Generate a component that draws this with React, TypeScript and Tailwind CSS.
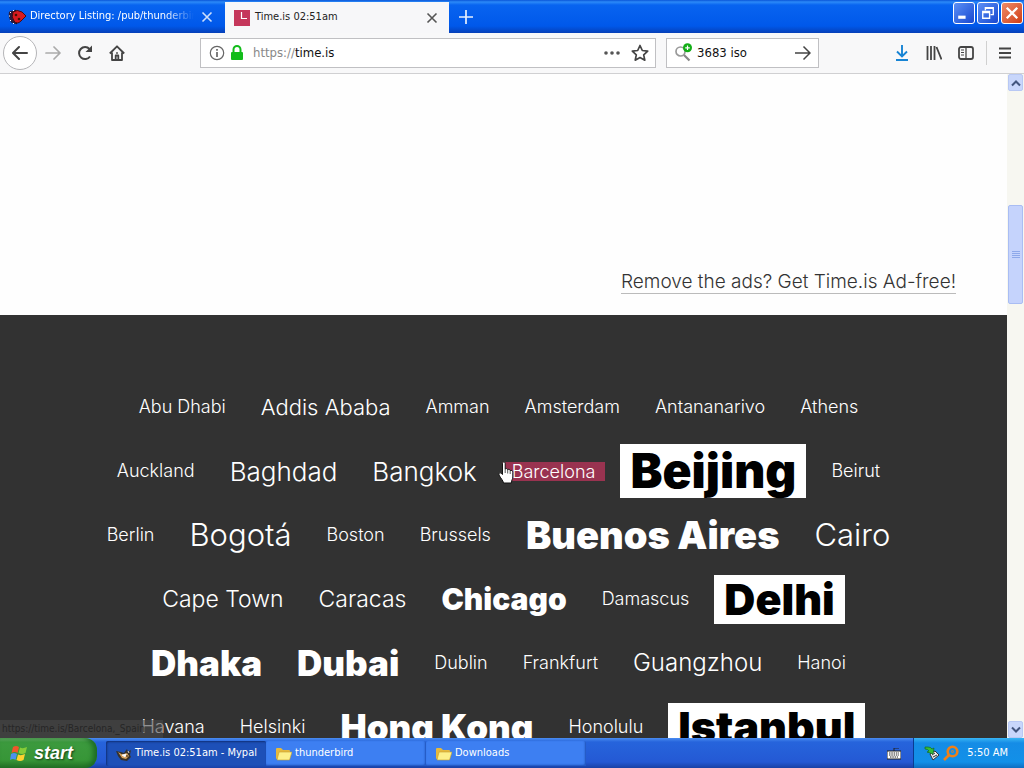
import React from "react";

type City = { name: string; cls: string; box?: boolean; hover?: boolean };

const s = "text-lg font-light";
const rows: City[][] = [
  [
    { name: "Abu Dhabi", cls: s },
    { name: "Addis Ababa", cls: "text-[22px] font-light" },
    { name: "Amman", cls: s },
    { name: "Amsterdam", cls: s },
    { name: "Antananarivo", cls: s },
    { name: "Athens", cls: s },
  ],
  [
    { name: "Auckland", cls: s },
    { name: "Baghdad", cls: "text-[26px] font-light" },
    { name: "Bangkok", cls: "text-[26px] font-light" },
    { name: "Barcelona", cls: s, hover: true },
    { name: "Beijing", cls: "text-5xl leading-[54px] font-black", box: true },
    { name: "Beirut", cls: s },
  ],
  [
    { name: "Berlin", cls: s },
    { name: "Bogotá", cls: "text-[31px] font-light" },
    { name: "Boston", cls: s },
    { name: "Brussels", cls: s },
    { name: "Buenos Aires", cls: "text-[38px] font-black" },
    { name: "Cairo", cls: "text-[31px] font-light" },
  ],
  [
    { name: "Cape Town", cls: "text-[23px] font-light" },
    { name: "Caracas", cls: "text-[23px] font-light" },
    { name: "Chicago", cls: "text-[30px] font-black" },
    { name: "Damascus", cls: s },
    { name: "Delhi", cls: "text-[43px] leading-[49px] font-black", box: true },
  ],
  [
    { name: "Dhaka", cls: "text-[35px] font-black" },
    { name: "Dubai", cls: "text-[35px] font-black" },
    { name: "Dublin", cls: s },
    { name: "Frankfurt", cls: s },
    { name: "Guangzhou", cls: "text-2xl font-light" },
    { name: "Hanoi", cls: s },
  ],
  [
    { name: "Havana", cls: s },
    { name: "Helsinki", cls: s },
    { name: "Hong Kong", cls: "text-[35px] font-black" },
    { name: "Honolulu", cls: s },
    { name: "Istanbul", cls: "text-[43px] leading-[49px] font-black", box: true },
  ],
];

function Close({ className }: { className: string }) {
  return (
    <svg viewBox="0 0 12 12" className={className} fill="none" stroke="currentColor" strokeWidth="1.6">
      <path d="M1.5 1.5l9 9M10.5 1.5l-9 9" />
    </svg>
  );
}

function Hand() {
  return (
    <svg viewBox="0 0 16 23" className="absolute -left-1 -top-px h-[23px] w-4" fill="#fff" stroke="#111" strokeWidth="1">
      <path d="M4.500 13.500V2.200C4.500 .300 7.200 .300 7.200 2.200V8C8 7.200 9.500 7.500 9.700 8.700C10.700 8 12 8.500 12.200 9.600C13.500 9 14.800 9.700 14.800 11.200V16C14.800 18 13.500 19 13.300 22H5.500C5.200 19.500 2.500 17 1 14C.300 12.300 2 11.200 3.200 12.300Z" />
      <path d="M7.200 8v4M9.700 9v3.500M12.200 10v3" strokeWidth=".7" />
    </svg>
  );
}

function TabBar() {
  return (
    <header className="flex h-[33px] shrink-0 bg-[linear-gradient(#0a55d8_0,#2c8af8_2px,#0864f0_5px,#0058ea_26px,#0640b8_33px)]">
      <div className="flex w-[225px] items-center pl-2 pr-3 text-white">
        <svg viewBox="0 0 18 16" className="h-4 w-[18px] shrink-0">
          <path d="M3 3l3 2M1 8h4M3 13l3-2M7 1l1 3M8 15l1-3" stroke="#111" strokeWidth="1.500" />
          <path d="M1 3Q0 8 3 13Q5 15 8 15L6 2Q3 1 1 3Z" fill="#2a1a3c" />
          <path d="M5 3Q9 0 14 3L18 7L13 12Q9 16 6 12Q3 8 5 3Z" fill="#d71a1f" stroke="#440b12" />
          <circle cx="8" cy="6" r="1.300" fill="#410" />
          <circle cx="11" cy="10" r="1.300" fill="#410" />
          <path d="M2 3l1 1M1 7h1M2 11l1 1M5 1l1 1M5 14l1 1" stroke="#fff" />
        </svg>
        <span className="ml-1 w-[164px] overflow-hidden whitespace-nowrap text-[11px] [mask-image:linear-gradient(90deg,#000_82%,transparent)]">Directory Listing: /pub/thunderbird</span>
        <button aria-label="Close tab" className="ml-auto text-white/80"><Close className="size-3" /></button>
      </div>
      <div className="mt-0.5 flex w-56 items-center bg-[#f7f7f9] pl-[9px] pr-[11px] text-[#222]">
        <svg viewBox="0 0 16 16" className="size-4"><path fill="#c5375b" d="M0 0h16v16H0z" /><path d="M7.500 2v6.500H13" fill="none" stroke="#fff" strokeWidth="1.200" /></svg>
        <span className="ml-[5px] text-[11px]">Time.is 02:51am</span>
        <button aria-label="Close tab" className="ml-auto text-[#555]"><Close className="size-3" /></button>
      </div>
      <button aria-label="New tab" className="ml-2.5 text-white/90">
        <svg viewBox="0 0 14 14" className="size-3.5" stroke="currentColor" strokeWidth="1.700"><path d="M7 0v14M0 7h14" /></svg>
      </button>
      <div className="ml-auto mr-px mt-0.5 flex gap-0.5">
        <button aria-label="Minimise" className="size-[22px] rounded-[3px] border border-white bg-linear-to-br from-[#5d8ff5] to-[#1846d0]">
          <svg viewBox="0 0 19 19"><path d="M4 12h7v3H4z" fill="#fff" /></svg>
        </button>
        <button aria-label="Restore" className="size-[22px] rounded-[3px] border border-white bg-linear-to-br from-[#5d8ff5] to-[#1846d0]">
          <svg viewBox="0 0 19 19" fill="none" stroke="#fff" strokeWidth="1.300"><path d="M7 7V4.500h7.500V11H12M4.500 8H11v6.500H4.500zM4.500 9H11M7 5h7.500" /></svg>
        </button>
        <button aria-label="Close" className="size-[22px] rounded-[3px] border border-white bg-linear-to-br from-[#ef8a67] to-[#cf3b0c]">
          <svg viewBox="0 0 19 19" stroke="#fff" strokeWidth="2.200"><path d="M4.500 4.500l10 10M14.500 4.500l-10 10" /></svg>
        </button>
      </div>
    </header>
  );
}

function Toolbar() {
  return (
    <nav className="flex h-[41px] shrink-0 items-center border-b border-[#d0d0d2] bg-[#f8f8f9] text-[#444]">
      <button aria-label="Back" className="ml-[3px] flex size-[34px] items-center justify-center rounded-full border border-[#b5b5b8] bg-white">
        <svg viewBox="0 0 16 16" className="size-4" fill="none" stroke="currentColor" strokeWidth="2" strokeLinecap="round" strokeLinejoin="round"><path d="M15 8H1.500M7 2L1 8l6 6" /></svg>
      </button>
      <button aria-label="Forward" className="ml-2 text-[#aaa]">
        <svg viewBox="0 0 16 16" className="size-4" fill="none" stroke="currentColor" strokeWidth="1.700" strokeLinecap="round" strokeLinejoin="round"><path d="M1 8h13.500M9 2l6 6-6 6" /></svg>
      </button>
      <button aria-label="Reload" className="ml-4">
        <svg viewBox="0 0 16 16" className="size-4" fill="none" stroke="currentColor" strokeWidth="2"><path d="M13 11.500A6 6 0 1 1 12.500 4" /><path d="M15 .500V7H8.500z" fill="currentColor" stroke="none" /></svg>
      </button>
      <button aria-label="Home" className="ml-4">
        <svg viewBox="0 0 16 16" className="size-4" fill="none" stroke="currentColor" strokeWidth="1.800" strokeLinejoin="round"><path d="M.800 8.500L8 1.300l7.200 7.200M3 7.500V15h10V7.500" /><path d="M6.700 15v-4.500h2.600V15M8 7.200v1.600" /></svg>
      </button>
      <div className="ml-[75px] flex h-[30px] min-w-0 flex-1 items-center border border-[#c0c0c3] bg-white pl-2 pr-1.5">
        <svg viewBox="0 0 16 16" className="size-4 shrink-0" fill="none" stroke="#666" strokeWidth="1.200"><circle cx="8" cy="8" r="6.700" /><path d="M8 7v5M8 4v1.700" strokeWidth="1.700" /></svg>
        <svg viewBox="0 0 14 16" className="ml-[5px] h-4 w-3.5 shrink-0"><path d="M3.500 8V4.500a3.500 3.500 0 0 1 7 0V8" fill="none" stroke="#12bc1a" strokeWidth="2" /><rect x="1" y="7" width="12" height="8" rx="1" fill="#12bc1a" /></svg>
        <a href="https://time.is" className="ml-[9px] text-[13px] text-[#111]"><span className="text-[#888]">https://</span>time.is</a>
        <svg viewBox="0 0 18 16" className="ml-auto h-4 w-[18px]" fill="#555"><circle cx="3" cy="8" r="1.800" /><circle cx="9" cy="8" r="1.800" /><circle cx="15" cy="8" r="1.800" /></svg>
        <button aria-label="Bookmark" className="ml-2.5">
          <svg viewBox="0 0 18 18" className="size-[18px]" fill="none" stroke="currentColor" strokeWidth="1.700" strokeLinejoin="round"><path d="M9 1.500l2.300 5 5.400.600-4 3.700 1.100 5.400L9 13.500l-4.800 2.700 1.100-5.400-4-3.700 5.400-.600z" /></svg>
        </button>
      </div>
      <div className="ml-2.5 flex h-[30px] w-[153px] items-center border border-[#c0c0c3] bg-white px-[7px]">
        <svg viewBox="0 0 20 20" className="size-5 shrink-0" fill="none"><circle cx="6.500" cy="8.500" r="4.500" stroke="#999" strokeWidth="1.700" /><path d="M10 12l5.500 5.500" stroke="#888" strokeWidth="2.200" /><circle cx="13.500" cy="4.800" r="4.500" fill="#12ae16" /><path d="M13.500 2.500v4.600M11.200 4.800h4.600" stroke="#fff" strokeWidth="1.200" /></svg>
        <input aria-label="Search" defaultValue="3683 iso" className="ml-[3px] w-20 min-w-0 flex-1 bg-transparent text-[13px] text-[#111] outline-none" />
        <button aria-label="Go"><svg viewBox="0 0 16 16" className="size-4" fill="none" stroke="currentColor" strokeWidth="1.500"><path d="M0 8h15M8.500 1.500L15 8l-6.500 6.500" /></svg></button>
      </div>
      <div className="ml-[75px] mr-3 flex items-center gap-4">
        <button aria-label="Downloads"><svg viewBox="0 0 16 16" className="size-4" fill="none" stroke="#1784d4" strokeWidth="1.900"><path d="M8 0v11M3 6.500l5 5 5-5M2 15h12" /></svg></button>
        <button aria-label="Library"><svg viewBox="0 0 16 16" className="size-4" fill="none" stroke="currentColor" strokeWidth="1.800"><path d="M1.500 1v14M5 1v14M8.500 1v14M10.500 2l5 12.500" /></svg></button>
        <button aria-label="Sidebars"><svg viewBox="0 0 16 16" className="size-4" fill="none" stroke="currentColor" strokeWidth="1.800"><rect x="1" y="2" width="14" height="12" rx="2" /><path d="M8 2v12" strokeWidth="1.300" /><path d="M3 5h3M3 7.500h3M3 10h3" strokeWidth="1" /></svg></button>
        <button aria-label="Menu" className="-ml-1 flex h-6 items-center border-l border-[#d0d0d0] pl-[11px]"><svg viewBox="0 0 14 14" className="size-3.5" stroke="currentColor" strokeWidth="1.900"><path d="M1 2.500h12M1 7h12M1 11.500h12" /></svg></button>
      </div>
    </nav>
  );
}

function ScrollButton({ down = false }: { down?: boolean }) {
  return (
    <button aria-label={down ? "Scroll down" : "Scroll up"} className="mx-px flex h-[17px] shrink-0 items-center justify-center rounded-xs border border-[#b8c8f4] bg-[#c8d6fb]">
      <svg viewBox="0 0 10 8" className={down ? "h-2 w-2.5 rotate-180" : "h-2 w-2.5"} fill="none" stroke="#42557e" strokeWidth="2"><path d="M1 6.500l4-4 4 4" /></svg>
    </button>
  );
}

function Folder() {
  return (
    <svg viewBox="0 0 16 14" className="h-3.5 w-4 shrink-0"><path d="M0 2Q0 1 1 1h4l2 2h6q1 0 1 1v8H1Q0 12 0 11z" fill="#e5b93e" /><path d="M3 5h13l-2.500 8H1z" fill="#fdf08a" stroke="#c79d2d" strokeWidth=".600" /></svg>
  );
}

function Taskbar() {
  const task = "flex h-[25px] w-40 items-center rounded-xs text-[11px] text-white";
  return (
    <footer className="flex h-[30px] shrink-0 bg-[linear-gradient(#4a8cf0_0,#2664dc_4px,#2459d4_24px,#1941a5_30px)]">
      <button className="flex w-[97px] items-center gap-1.5 rounded-r-xl bg-[linear-gradient(#72b873_0,#3c9a3e_4px,#379637_22px,#247225_30px)] pl-2.5 font-['Liberation_Sans'] text-lg font-bold italic text-white shadow-[inset_-4px_0_5px_#1d6c25] [text-shadow:1px_1px_2px_#143d16]">
        <svg viewBox="0 0 18 17" className="h-[17px] w-[18px]"><path d="M3 2Q6 0 9 2L7.500 8Q5 6 1.500 8z" fill="#f0562b" /><path d="M10 2.500Q13 4 17 2L15.500 8Q12 10 8.500 8z" fill="#86cc38" /><path d="M1 9Q4 7 7 9L5.500 15Q3 13 0 15z" fill="#4b91ee" /><path d="M8 9.500Q11 11 15 9L13.500 15Q10 17 6.500 15z" fill="#ffd22f" /></svg>
        start
      </button>
      <div className="ml-[9px] mt-[3px] flex">
        <button className={`${task} bg-[#1d50b8] pl-2.5 shadow-[inset_1px_1px_2px_#102f78]`}>
          <svg viewBox="0 0 16 16" className="mr-[3px] size-4 shrink-0"><path d="M0 5l5 1 3 1 3-4 1 3 3-2-1 5 1 2-4 4-6-1-3-4z" fill="#36322c" /><path d="M2 6l5 3 4-2 2 3-3 3-4-1z" fill="#d9a25c" /><path d="M6 9l4-1-1 3zM12 5l1 2" fill="#fff" stroke="#fff" strokeWidth=".800" /><circle cx="11" cy="10" r=".800" fill="#111" /></svg>
          <span className="whitespace-nowrap">Time.is 02:51am - Mypal</span>
        </button>
        <button className={`${task} gap-[3px] bg-[#3d7ff2] pl-2.5 shadow-[inset_-1px_-1px_2px_#1d50b8]`}><Folder />thunderbird</button>
        <button className={`${task} gap-[3px] bg-[#3d7ff2] pl-2.5 shadow-[inset_-1px_-1px_2px_#1d50b8]`}><Folder />Downloads</button>
      </div>
      <svg viewBox="0 0 14 12" className="ml-auto mr-3 mt-2.5 h-3 w-3.5"><path d="M7 3V0h5" stroke="#222" fill="none" /><path d="M0 3h14v8H0z" fill="#fff" stroke="#222" /><path d="M2 5h10M2 7h10M3 9h8" stroke="#222" strokeDasharray="1.500 .800" /></svg>
      <div className="flex w-[111px] items-center justify-end border-l border-[#093c91] bg-[linear-gradient(#38b5f4_0,#158ce6_5px,#1290e8_24px,#0e6dc0_30px)] pr-4 text-[11px] text-white">
        <svg viewBox="0 0 16 16" className="size-4 shrink-0"><path d="M6 9l5-3 4 4-6 5z" fill="#eee" stroke="#333" /><path d="M8 10l3-2M9 12l4-2" stroke="#333" /><path d="M1 2h3q3 0 4 2l2-1-1 6-6-2 2-1Q4 4 1 4z" fill="#35be35" stroke="#126b22" strokeWidth=".700" /></svg>
        <svg viewBox="0 0 16 16" className="ml-[3px] size-4 shrink-0" fill="none" stroke="#f08018" strokeWidth="2.600"><circle cx="9.500" cy="6.500" r="4.800" /><path d="M6 10l-5 5" /><circle cx="9.500" cy="6.500" r="1" strokeWidth="1" /></svg>
        <span className="ml-2 whitespace-nowrap">5:50 AM</span>
      </div>
    </footer>
  );
}

export default function App() {
  return (
    <div className="flex h-screen flex-col overflow-hidden bg-white font-['DejaVu_Sans_Condensed','DejaVu_Sans',sans-serif]">
      <TabBar />
      <Toolbar />
      <div className="relative flex min-h-0 flex-1">
        <main className="min-w-0 flex-1 overflow-hidden bg-[#323232] font-['Inter',sans-serif]">
          <div className="flex h-[241px] items-end justify-end bg-[#fefefe] pb-[21px] pr-[51px]">
            <a href="#ad-free" className="border-b border-[#bbb] text-[19px] leading-[22px] font-light text-[#333]">Remove the ads? Get Time.is Ad-free!</a>
          </div>
          <div className="pr-2.5 pt-[60px] text-white">
            {rows.map((row) => (
              <div key={row[0].name} className="flex h-16 items-center justify-center gap-[15px] whitespace-nowrap">
                {row.map((c) => (
                  <a key={c.name} href={"#" + c.name} className={`${c.cls} px-2.5 ${c.box ? "bg-white text-black" : ""} ${c.hover ? "relative bg-[#993350] leading-[19px]" : ""}`}>
                    {c.name}
                    {c.hover && <Hand />}
                  </a>
                ))}
              </div>
            ))}
          </div>
        </main>
        <aside className="flex w-[17px] shrink-0 flex-col bg-[#f7f7f1]">
          <ScrollButton />
          <div className="flex-[114]" />
          <div className="mx-px flex h-[99px] items-center justify-center rounded-xs border border-[#a9bdf3] bg-[#c5d3fc]">
            <svg viewBox="0 0 8 8" className="size-2" stroke="#8da8ea"><path d="M0 .500h8M0 2.500h8M0 4.500h8M0 6.500h8" /></svg>
          </div>
          <div className="flex-[417]" />
          <ScrollButton down />
        </aside>
        <div className="absolute bottom-0 left-0 h-[18px] w-[163px] overflow-hidden whitespace-nowrap bg-[#484848]/60 pl-0.5 text-[10px] leading-[18px] text-[#262626]">https://time.is/Barcelona,_Spain</div>
      </div>
      <Taskbar />
    </div>
  );
}
